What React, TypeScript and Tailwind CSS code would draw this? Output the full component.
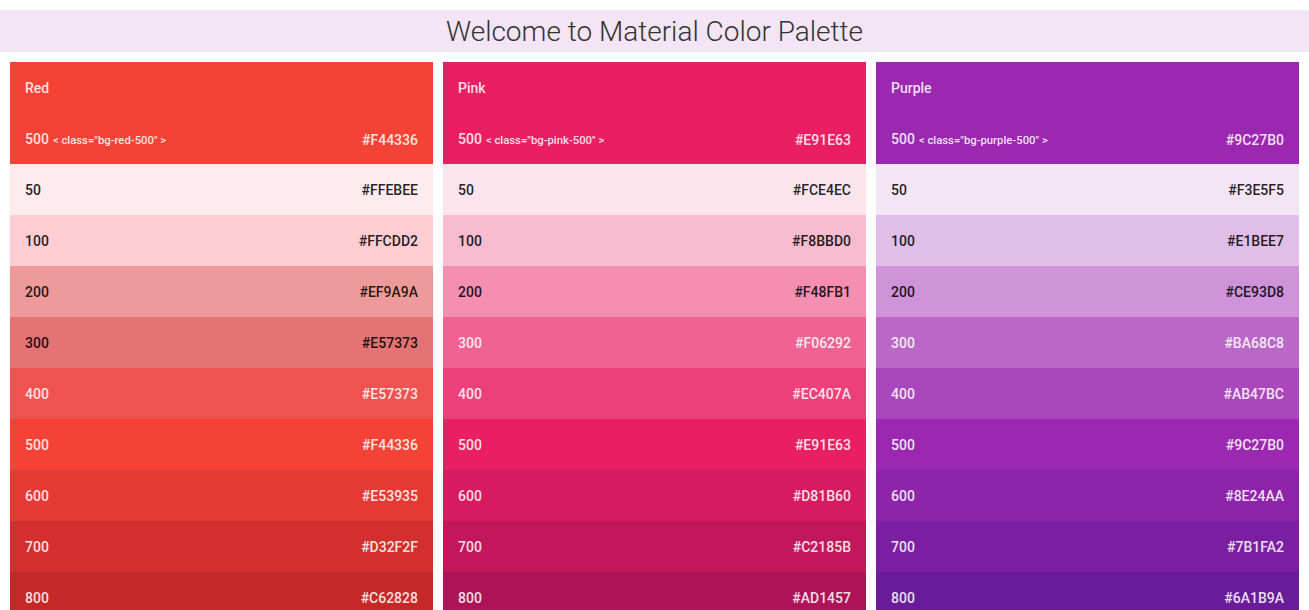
import React from "react";

type Shade = { name: string; bg: string; hex: string; dark: boolean };
type Palette = { title: string; cls: string; main: string; shades: Shade[] };

const palettes: Palette[] = [
  {
    title: "Red",
    cls: "bg-red-500",
    main: "#F44336",
    shades: [
      { name: "50", bg: "#FFEBEE", hex: "#FFEBEE", dark: true },
      { name: "100", bg: "#FFCDD2", hex: "#FFCDD2", dark: true },
      { name: "200", bg: "#EF9A9A", hex: "#EF9A9A", dark: true },
      { name: "300", bg: "#E57373", hex: "#E57373", dark: true },
      { name: "400", bg: "#EF5350", hex: "#E57373", dark: false },
      { name: "500", bg: "#F44336", hex: "#F44336", dark: false },
      { name: "600", bg: "#E53935", hex: "#E53935", dark: false },
      { name: "700", bg: "#D32F2F", hex: "#D32F2F", dark: false },
      { name: "800", bg: "#C62828", hex: "#C62828", dark: false },
      { name: "900", bg: "#B71C1C", hex: "#B71C1C", dark: false },
    ],
  },
  {
    title: "Pink",
    cls: "bg-pink-500",
    main: "#E91E63",
    shades: [
      { name: "50", bg: "#FCE4EC", hex: "#FCE4EC", dark: true },
      { name: "100", bg: "#F8BBD0", hex: "#F8BBD0", dark: true },
      { name: "200", bg: "#F48FB1", hex: "#F48FB1", dark: true },
      { name: "300", bg: "#F06292", hex: "#F06292", dark: false },
      { name: "400", bg: "#EC407A", hex: "#EC407A", dark: false },
      { name: "500", bg: "#E91E63", hex: "#E91E63", dark: false },
      { name: "600", bg: "#D81B60", hex: "#D81B60", dark: false },
      { name: "700", bg: "#C2185B", hex: "#C2185B", dark: false },
      { name: "800", bg: "#AD1457", hex: "#AD1457", dark: false },
      { name: "900", bg: "#880E4F", hex: "#880E4F", dark: false },
    ],
  },
  {
    title: "Purple",
    cls: "bg-purple-500",
    main: "#9C27B0",
    shades: [
      { name: "50", bg: "#F3E5F5", hex: "#F3E5F5", dark: true },
      { name: "100", bg: "#E1BEE7", hex: "#E1BEE7", dark: true },
      { name: "200", bg: "#CE93D8", hex: "#CE93D8", dark: true },
      { name: "300", bg: "#BA68C8", hex: "#BA68C8", dark: false },
      { name: "400", bg: "#AB47BC", hex: "#AB47BC", dark: false },
      { name: "500", bg: "#9C27B0", hex: "#9C27B0", dark: false },
      { name: "600", bg: "#8E24AA", hex: "#8E24AA", dark: false },
      { name: "700", bg: "#7B1FA2", hex: "#7B1FA2", dark: false },
      { name: "800", bg: "#6A1B9A", hex: "#6A1B9A", dark: false },
      { name: "900", bg: "#4A148C", hex: "#4A148C", dark: false },
    ],
  },
];

function Card({ p }: { p: Palette }) {
  return (
    <div className="flex-1 min-w-0 flex flex-col">
      <div
        className="h-[102px] flex flex-col justify-between px-[15px] pt-[16px] pb-[13px] text-white/[0.87]"
        style={{ backgroundColor: p.main }}
      >
        <div className="text-[14px] leading-5 font-medium">{p.title}</div>
        <div className="flex items-center justify-between leading-5 font-medium">
          <div className="flex items-baseline">
            <span className="text-[14px]">500</span>
            <span className="text-[11.3px] ml-[4px]">
              &lt; class="{p.cls}" &gt;
            </span>
          </div>
          <span className="text-[14px]">{p.main}</span>
        </div>
      </div>
      {p.shades.map((s) => (
        <div
          key={s.name}
          className={
            "h-[51px] shrink-0 flex items-center justify-between px-[15px] pt-[2px] text-[14px] font-medium " +
            (s.dark ? "text-black/[0.87]" : "text-white/[0.87]")
          }
          style={{ backgroundColor: s.bg }}
        >
          <span>{s.name}</span>
          <span>{s.hex}</span>
        </div>
      ))}
    </div>
  );
}

export default function App() {
  return (
    <div
      className="bg-white min-h-screen pt-[10px]"
      style={{ fontFamily: "Roboto, 'Liberation Sans', sans-serif" }}
    >
      <div className="h-[42px] bg-[#F3E5F5] flex items-center justify-center pt-[2px]">
        <h1 className="text-[28px] font-light text-[#333] leading-[40px]">
          Welcome to Material Color Palette
        </h1>
      </div>
      <div className="flex gap-[10px] px-[10px] mt-[10px]">
        {palettes.map((p) => (
          <Card key={p.title} p={p} />
        ))}
      </div>
    </div>
  );
}
